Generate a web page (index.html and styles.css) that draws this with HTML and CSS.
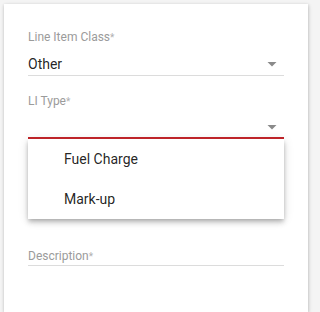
FILE: index.html
```html
<!DOCTYPE html>
<html>
<head>
<meta charset="utf-8">
<link rel="stylesheet" href="styles.css">
</head>
<body>
<div class="card">
  <div class="field">
    <div class="label">Line Item Class<span class="req">*</span></div>
    <div class="select">
      <span class="value">Other</span>
      <svg class="arrow" width="10" height="5" viewBox="0 0 10 5"><polygon points="0.5,0 9.5,0 5,4.5" fill="#8a8a8a"/></svg>
    </div>
    <div class="line"></div>
  </div>
  <div class="field field-open">
    <div class="label">LI Type<span class="req">*</span></div>
    <div class="select select-open">
      <span class="value"></span>
      <svg class="arrow" width="10" height="5" viewBox="0 0 10 5"><polygon points="0.5,0 9.5,0 5,4.5" fill="#8a8a8a"/></svg>
    </div>
    <div class="line-focus"></div>
    <div class="menu-anchor">
      <div class="menu">
        <div class="item">Fuel Charge</div>
        <div class="item">Mark-up</div>
      </div>
    </div>
  </div>
  <div class="field field-desc">
    <div class="label">Description<span class="req">*</span></div>
    <div class="line line-desc"></div>
  </div>
</div>
</body>
</html>
```

FILE: styles.css
```css
html, body {
  margin: 0;
  padding: 0;
  background: #f4f4f4;
  font-family: Roboto, "Liberation Sans", sans-serif;
  overflow: hidden;
  height: 312px;
}
.card {
  margin: 4px 4px 0 4px;
  width: 304px;
  height: 308px;
  box-sizing: border-box;
  background: #fff;
  box-shadow: 0 1px 3px rgba(0,0,0,0.18), 1px 1px 4px rgba(0,0,0,0.1);
  padding: 25px 24px 0 24px;
}
.field {
  position: relative;
  width: 256px;
}
.label {
  font-size: 12px;
  line-height: 16px;
  height: 16px;
  overflow: visible;
  color: #9b9b9b;
}
.req {
  font-size: 10px;
  line-height: 1;
  color: #b0b0b0;
}
.select {
  margin-top: 8px;
  height: 22px;
  display: flex;
  align-items: center;
  justify-content: space-between;
}
.select-open {
  height: 20px;
}
.value {
  font-size: 14px;
  line-height: 20px;
  color: rgba(0,0,0,0.87);
}
.arrow {
  margin-right: 7px;
  display: block;
}
.line {
  height: 1px;
  background: #dcdcdc;
}
.line-focus {
  position: relative;
  z-index: 3;
  height: 2px;
  background: #bd2328;
}
.field-open {
  margin-top: 17px;
}
.menu-anchor {
  position: relative;
  height: 0;
}
.menu {
  position: absolute;
  left: 0;
  top: 0;
  width: 256px;
  background: #fff;
  box-shadow: 0 2px 4px -1px rgba(0,0,0,0.2), 0 4px 5px 0 rgba(0,0,0,0.14), 0 1px 10px 0 rgba(0,0,0,0.12);
  z-index: 2;
}
.item {
  height: 40px;
  line-height: 40px;
  padding-left: 36px;
  font-size: 14px;
  color: rgba(0,0,0,0.87);
}
.field-desc {
  margin-top: 109px;
}
.line-desc {
  margin-top: 1px;
}
```
